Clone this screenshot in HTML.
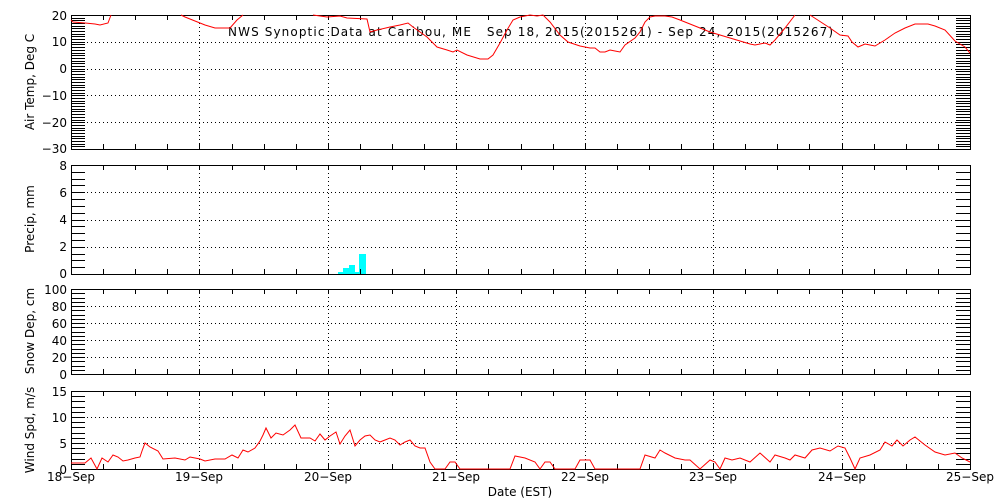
<!DOCTYPE html>
<html><head><meta charset="utf-8"><style>
html,body{margin:0;padding:0;background:#fff;width:1000px;height:500px;overflow:hidden}
svg text{font-family:"DejaVu Sans","Liberation Sans",sans-serif;font-size:12px;fill:#000}
</style></head><body>
<svg id="s" width="1000" height="500" xmlns="http://www.w3.org/2000/svg" shape-rendering="crispEdges">
<text x="228" y="36" font-size="14" textLength="605" lengthAdjust="spacing" xml:space="preserve" style="white-space:pre">NWS Synoptic Data at Caribou, ME   Sep 18, 2015(2015261) - Sep 24, 2015(2015267)</text>
<g text-anchor="end" font-size="11">
<text x="67" y="20">20</text><text x="67" y="46">10</text><text x="67" y="73">0</text><text x="67" y="100">−10</text><text x="67" y="127">−20</text><text x="67" y="153">−30</text>
<text x="67" y="170">8</text><text x="67" y="197">6</text><text x="67" y="224">4</text><text x="67" y="251">2</text><text x="67" y="278">0</text>
<text x="67" y="294">100</text><text x="67" y="311">80</text><text x="67" y="328">60</text><text x="67" y="345">40</text><text x="67" y="362">20</text><text x="67" y="379">0</text>
<text x="67" y="396">15</text><text x="67" y="422">10</text><text x="67" y="448">5</text><text x="67" y="474">0</text>
</g>
<g text-anchor="middle" font-size="11">
<text x="71" y="481">18−Sep</text><text x="199" y="481">19−Sep</text><text x="328" y="481">20−Sep</text><text x="456" y="481">21−Sep</text><text x="585" y="481">22−Sep</text><text x="713" y="481">23−Sep</text><text x="842" y="481">24−Sep</text><text x="970" y="481">25−Sep</text>
<text x="520" y="496">Date (EST)</text>
</g>
<g font-size="12" text-anchor="middle">
<text transform="translate(34,82) rotate(-90)">Air Temp, Deg C</text>
<text transform="translate(34,219) rotate(-90)">Precip, mm</text>
<text transform="translate(34,331) rotate(-90)">Snow Dep, cm</text>
<text transform="translate(34,430) rotate(-90)">Wind Spd, m/s</text>
</g>
<g fill="#00ffff">
<rect x="338" y="272" width="5" height="2"/><rect x="343" y="268" width="6" height="6"/><rect x="349" y="265" width="6" height="9"/><rect x="355" y="272" width="4" height="2"/><rect x="359" y="254" width="7" height="20"/>
</g>
<g id="ax"></g>
<g fill="none" stroke="#ff0000" stroke-width="1" shape-rendering="auto">
<polyline points="71,20 73,22 85,23 95,24 100,25 108,23 111,15"/>
<polyline points="181,15 185,17 195,21 205,25 215,28 230,28 237,20 243,15"/>
<polyline points="313,15 327,17 340,16 347,18 367,19 370,32 377,30 390,27 400,25 408,23 413,27 427,37 437,47 447,50 453,52 457,50 467,55 480,59 488,59 493,55 500,43 507,30 513,20 520,17 530,15 537,16 543,15 550,22 560,35 568,42 580,46 590,48 595,48 600,52 605,52 610,50 615,51 620,52 625,45 635,38 640,32 645,22 650,17 655,16 665,16 672,17 680,20 690,24 700,28 710,32 720,35 730,38 740,41 750,44 755,45 760,44 765,43 770,45 775,40 785,28 795,15"/>
<polyline points="810,15 830,28 840,35 848,36 852,42 858,47 865,44 870,45 875,46 885,40 895,33 905,28 915,24 928,24 935,26 945,30 955,41 965,47 970,53"/>
<polyline points="71,463 85,463 91,458 97,469 102,458 108,462 113,455 118,457 123,461 128,460 135,458 140,457 142,451 145,443 150,447 158,451 163,459 175,458 185,460 190,457 200,459 205,461 215,459 225,459 232,455 238,458 243,450 248,452 255,448 260,441 263,435 266,428 271,438 276,433 283,435 290,430 295,425 301,438 310,438 315,441 320,434 325,440 330,436 336,432 340,444 345,436 350,430 355,446 360,440 365,436 370,435 375,440 380,442 385,440 390,438 395,440 400,445 405,442 410,440 415,446 420,448 425,448 430,462 435,469 445,469 450,462 455,462 460,469 510,469 515,456 525,458 535,462 540,469 545,462 550,462 555,469 575,469 580,460 590,460 595,469 640,469 645,455 655,458 660,450 665,453 675,458 685,460 690,460 700,469 710,460 715,462 720,469 725,458 732,460 740,458 750,462 760,453 770,462 775,455 785,458 790,460 795,455 805,458 812,450 820,448 830,451 838,446 845,448 850,458 855,469 860,458 870,455 880,450 885,442 892,446 897,440 903,446 910,440 915,437 925,445 935,452 945,455 955,453 962,458 970,462"/>
</g>
</svg>
<script>
var g=document.getElementById('ax'),L=71,R=970,dw=(R-L)/7,h='';
function ln(x1,y1,x2,y2,d){h+='<line x1="'+x1+'" y1="'+y1+'" x2="'+x2+'" y2="'+y2+'" stroke="#000" stroke-width="1"'+(d?' stroke-dasharray="1 3"':'')+'/>';}
var P=[[15,149,20,-30,10,1],[165,274,8,0,2,0.5],[289,374,100,0,20,5],[391,469,15,0,5,1]];
P.forEach(function(p){var t=p[0],b=p[1],hi=p[2],lo=p[3],mj=p[4],mn=p[5];
 function Y(v){return t+(hi-v)/(hi-lo)*(b-t);}
 for(var i=1;i<7;i++){var x=Math.round(L+i*dw)+.5;ln(x,t,x,b,1);}
 for(var v=lo+mj;v<hi-1e-6;v+=mj){var y=Math.round(Y(v))+.5;ln(L,y,R,y,1);}
 for(var v=lo;v<=hi+1e-6;v+=mn){var y=Math.round(Y(v))+.5;ln(L,y,L+14,y);ln(R-14,y,R,y);}
 for(var k=1;k<28;k++){var x=Math.round(L+k*dw/4)+.5;ln(x,t,x,t+5);ln(x,b-5,x,b);}
 h+='<rect x="'+(L+.5)+'" y="'+(t+.5)+'" width="'+(R-L)+'" height="'+(b-t)+'" fill="none" stroke="#000" stroke-width="1"/>';
});
g.innerHTML=h;
</script>
</body></html>
